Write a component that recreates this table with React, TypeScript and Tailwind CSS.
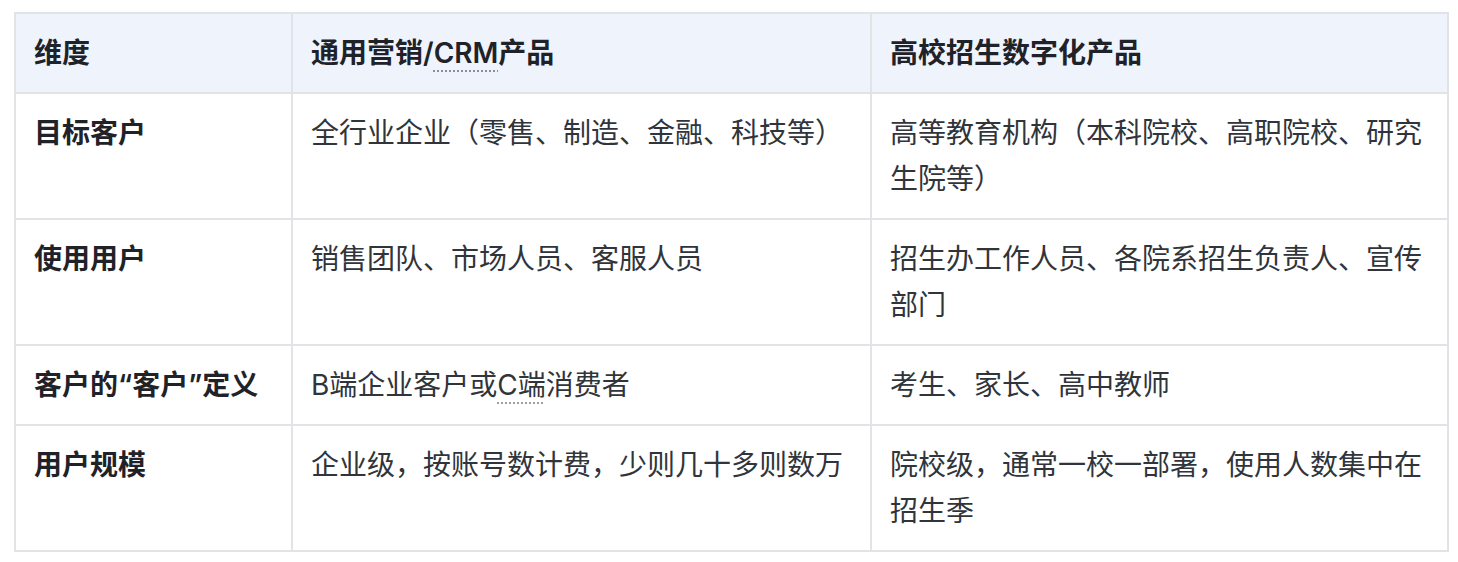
const rows: { label: string; general: React.ReactNode; campus: string }[] = [
  {
    label: "目标客户",
    general: "全行业企业（零售、制造、金融、科技等）",
    campus: "高等教育机构（本科院校、高职院校、研究生院等）",
  },
  {
    label: "使用用户",
    general: "销售团队、市场人员、客服人员",
    campus: "招生办工作人员、各院系招生负责人、宣传部门",
  },
  {
    label: "客户的“客户”定义",
    general: (
      <>
        B端企业客户或
        <span className="underline decoration-dotted decoration-[#9aa0a6] decoration-2 underline-offset-[7px]">
          C端
        </span>
        消费者
      </>
    ),
    campus: "考生、家长、高中教师",
  },
  {
    label: "用户规模",
    general: "企业级，按账号数计费，少则几十多则数万",
    campus: "院校级，通常一校一部署，使用人数集中在招生季",
  },
];

const cell =
  "border-2 border-[#e1e3e6] px-[18px] py-[16px] text-[28px] leading-[46px] align-top text-left";

export default function App() {
  return (
    <div
      className="w-[1458px] h-[562px] bg-white pt-[12px] pl-[14px]"
      style={{ fontFamily: 'Inter, "Noto Sans CJK SC", sans-serif' }}
    >
      <table className="table-fixed border-collapse w-[1433px]">
        <colgroup>
          <col className="w-[277px]" />
          <col className="w-[579px]" />
          <col className="w-[577px]" />
        </colgroup>
        <thead>
          <tr className="bg-[#eff3fc]">
            <th className={`${cell} font-semibold text-[#1f2329]`}>维度</th>
            <th className={`${cell} font-semibold text-[#1f2329]`}>
              通用营销/
              <span className="underline decoration-dotted decoration-[#8a8f99] decoration-2 underline-offset-[7px]">
                CRM
              </span>
              产品
            </th>
            <th className={`${cell} font-semibold text-[#1f2329]`}>高校招生数字化产品</th>
          </tr>
        </thead>
        <tbody>
          {rows.map((row) => (
            <tr key={row.label}>
              <td className={`${cell} font-semibold text-[#1f2329]`}>{row.label}</td>
              <td className={`${cell} text-[#30343b]`}>{row.general}</td>
              <td className={`${cell} text-[#30343b]`}>{row.campus}</td>
            </tr>
          ))}
        </tbody>
      </table>
    </div>
  );
}
